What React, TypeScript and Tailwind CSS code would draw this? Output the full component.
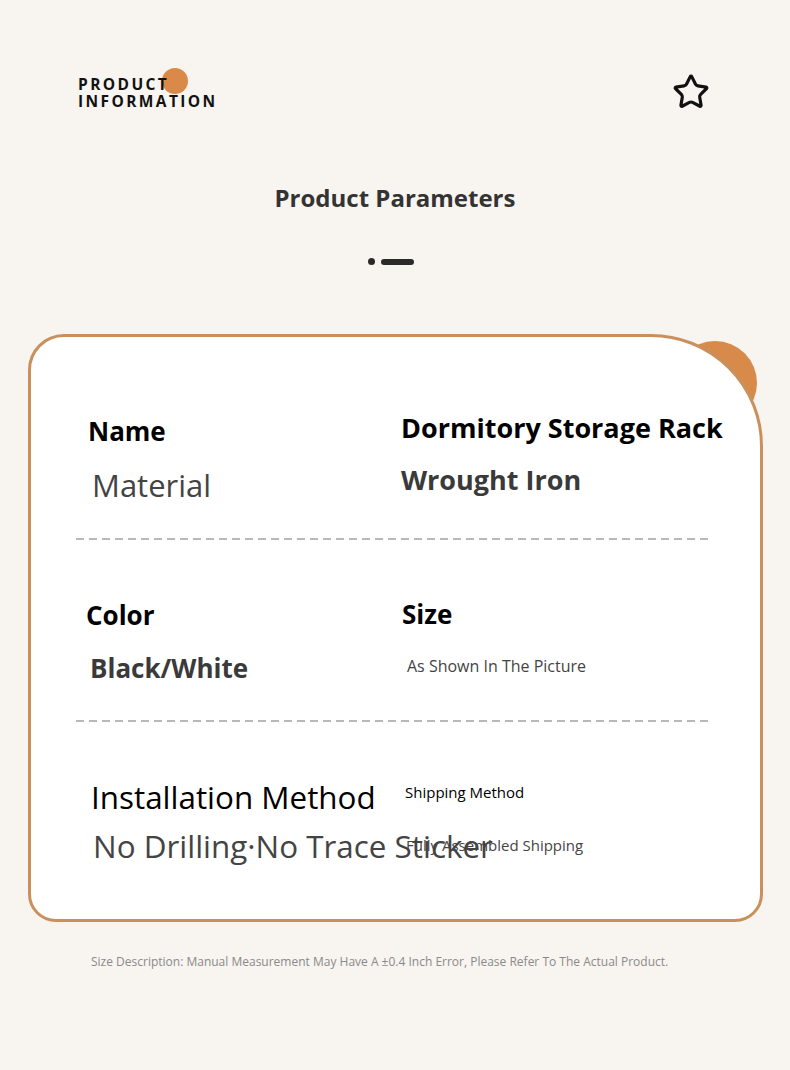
import { Star } from 'lucide-react';

function Dashed() {
  return (
    <div className="ml-[45px] mr-[50px] h-[2px] bg-[linear-gradient(to_right,#b8b8b8_8px,transparent_8px)] bg-[length:13px_2px] bg-repeat-x" />
  );
}

export default function App() {
  return (
    <div className="w-[790px] h-[1070px] bg-[#f8f4f0] font-['Open_Sans',sans-serif] flex flex-col overflow-hidden">
      {/* header */}
      <div className="flex justify-between items-start pt-[73px] pl-[78px] pr-[80px]">
        <div className="relative mt-[3px]">
          <div className="absolute left-[84px] top-[-8px] w-[26px] h-[26px] rounded-full bg-[#d98a48]" />
          <div className="relative text-[15.5px] font-bold leading-[17px] tracking-[2.4px] text-[#111]">
            <div>PRODUCT</div>
            <div>INFORMATION</div>
          </div>
        </div>
        <Star size={38} strokeWidth={2} className="text-[#111]" />
      </div>

      <div className="mt-[72px] text-center text-[24px] font-bold leading-[30px] text-[#333]">
        Product Parameters
      </div>

      <div className="mt-[45px] flex justify-center items-center gap-[6px] mr-[9px]">
        <div className="w-[7px] h-[7px] rounded-full bg-[#2a2a2a]" />
        <div className="w-[33px] h-[6px] rounded-full bg-[#2a2a2a]" />
      </div>

      {/* card */}
      <div className="relative mt-[69px] ml-[28px] w-[735px]">
        <div className="absolute right-[6px] top-[7px] w-[84px] h-[84px] rounded-full bg-[#d78a4a]" />
        <div className="relative h-[588px] bg-white border-[3px] border-[#c9905c] rounded-tl-[36px] rounded-tr-[112px] rounded-bl-[28px] rounded-br-[28px] pt-[74px]">
          {/* section 1 */}
          <div className="grid grid-cols-[313px_1fr] pl-[57px]">
            <div className="flex flex-col">
              <div className="h-[40px] flex items-center text-[26px] font-bold text-black">Name</div>
              <div className="mt-[14px] h-[40px] flex items-center pl-[4px] text-[31px] text-[#444]">Material</div>
            </div>
            <div className="flex flex-col -mt-[3px]">
              <div className="h-[40px] flex items-center text-[27px] font-bold text-black whitespace-nowrap">Dormitory Storage Rack</div>
              <div className="mt-[12px] h-[40px] flex items-center text-[27px] font-bold text-[#3a3a3a]">Wrought Iron</div>
            </div>
          </div>

          <div className="mt-[33px]">
            <Dashed />
          </div>

          {/* section 2 */}
          <div className="mt-[55px] grid grid-cols-[313px_1fr] pl-[55px]">
            <div className="flex flex-col">
              <div className="h-[40px] flex items-center text-[26px] font-bold text-black">Color</div>
              <div className="mt-[13px] h-[40px] flex items-center pl-[4px] text-[26px] font-bold text-[#3a3a3a]">Black/White</div>
            </div>
            <div className="flex flex-col -mt-[1px] pl-[3px]">
              <div className="h-[40px] flex items-center text-[26px] font-bold text-black">Size</div>
              <div className="mt-[12px] h-[40px] flex items-center pl-[5px] text-[16px] text-[#444]">As Shown In The Picture</div>
            </div>
          </div>

          <div className="mt-[32px]">
            <Dashed />
          </div>

          {/* section 3 */}
          <div className="mt-[52px] grid grid-cols-[313px_1fr] pl-[60px]">
            <div className="flex flex-col">
              <div className="h-[46px] flex items-center text-[31.4px] text-black whitespace-nowrap">Installation Method</div>
              <div className="mt-[3px] h-[46px] flex items-center pl-[2px] text-[31.4px] text-[#444] whitespace-nowrap">No Drilling·No Trace Sticker</div>
            </div>
            <div className="relative flex flex-col -mt-[5px] pl-[1px]">
              <div className="h-[46px] flex items-center text-[15px] text-black">Shipping Method</div>
              <div className="mt-[7px] h-[46px] flex items-center pl-[1px] text-[15px] text-[#444] whitespace-nowrap">Fully Assembled Shipping</div>
            </div>
          </div>
        </div>
      </div>

      <div className="mt-[31px] pl-[91px] text-[12px] leading-[18px] text-[#8a8a8a]">
        Size Description: Manual Measurement May Have A ±0.4 Inch Error, Please Refer To The Actual Product.
      </div>
    </div>
  );
}
